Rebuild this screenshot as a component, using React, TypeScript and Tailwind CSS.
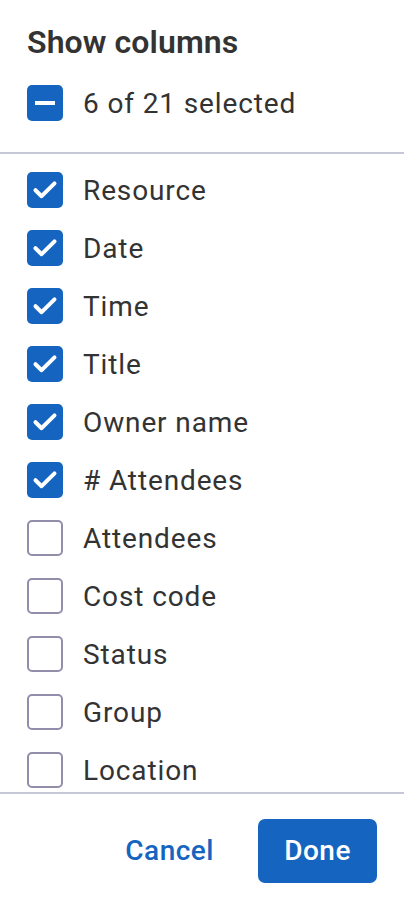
import React from "react";

const BLUE = "bg-[#1565c0]";

function Checked() {
  return (
    <div className={`w-[36px] h-[36px] rounded-[5px] ${BLUE} flex items-center justify-center shrink-0`}>
      <svg width="36" height="36" viewBox="0 0 36 36">
        <path d="M8.5 18.2 L14.6 24.2 L27.5 11.3" fill="none" stroke="white" strokeWidth="4" strokeLinecap="round" strokeLinejoin="round" />
      </svg>
    </div>
  );
}

function Unchecked() {
  return <div className="w-[36px] h-[36px] rounded-[5px] border-2 border-[#928dab] bg-white shrink-0" />;
}

function Indeterminate() {
  return (
    <div className={`w-[36px] h-[36px] rounded-[5px] ${BLUE} flex items-center justify-center shrink-0`}>
      <div className="w-[20px] h-[4px] bg-white" />
    </div>
  );
}

const items: [string, boolean][] = [
  ["Resource", true],
  ["Date", true],
  ["Time", true],
  ["Title", true],
  ["Owner name", true],
  ["# Attendees", true],
  ["Attendees", false],
  ["Cost code", false],
  ["Status", false],
  ["Group", false],
  ["Location", false],
];

export default function App() {
  return (
    <div className="w-[404px] h-[898px] flex flex-col bg-white font-['Roboto',_'Liberation_Sans',_sans-serif] text-[#333333] overflow-hidden">
      <div className="px-[27px] pt-[23px]">
        <h1 className="text-[32px] leading-[38px] font-semibold tracking-[0.1px]">Show columns</h1>
        <div className="mt-[24px] flex items-center gap-[20px] h-[36px]">
          <Indeterminate />
          <span className="text-[28px] leading-[36px] tracking-[0.875px] pt-[1px]">6 of 21 selected</span>
        </div>
      </div>
      <div className="mt-[31px] h-[2px] bg-[#c6c8d8]" />
      <div className="h-[638px] overflow-hidden pt-[7px] px-[27px]">
        {items.map(([label, checked]) => (
          <div key={label} className="h-[58px] flex items-center gap-[20px]">
            {checked ? <Checked /> : <Unchecked />}
            <span className="text-[28px] leading-[36px] tracking-[0.875px] pt-[1px]">{label}</span>
          </div>
        ))}
      </div>
      <div className="h-[2px] bg-[#c6c8d8]" />
      <div className="flex justify-end items-center gap-[44px] pr-[27px] pt-[25px]">
        <button className="h-[64px] flex items-center text-[28px] font-medium text-[#1565c0] tracking-[0.5px]">Cancel</button>
        <button className={`w-[119px] h-[64px] rounded-[7px] ${BLUE} text-white text-[28px] font-medium tracking-[0.5px] flex items-center justify-center`}>
          Done
        </button>
      </div>
    </div>
  );
}
